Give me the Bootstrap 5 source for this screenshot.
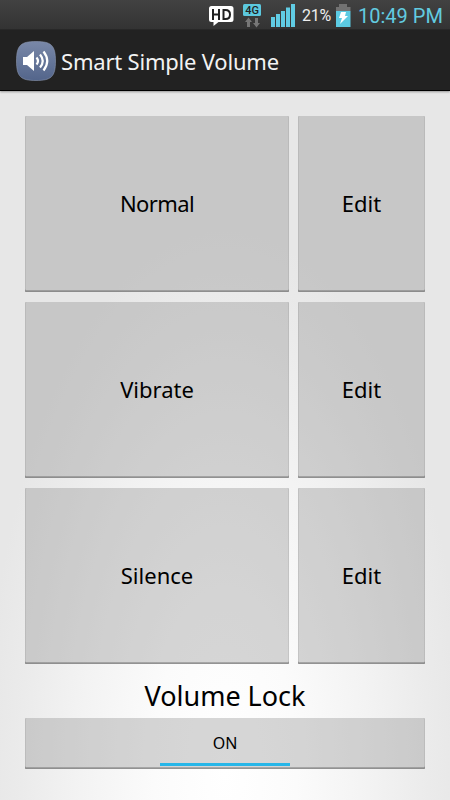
<!DOCTYPE html>
<html lang="en">
<head>
  <meta charset="UTF-8" />
  <meta name="viewport" content="width=device-width, initial-scale=1" />
  <title>Smart Simple Volume</title>
  <link href="https://cdn.jsdelivr.net/npm/bootstrap@5.3.0/dist/css/bootstrap.min.css" rel="stylesheet" />
  <style>
    body {
      height: 800px;
      overflow: hidden;
      font-family: "Noto Sans", "Open Sans", sans-serif;
      color: #000;
      background: radial-gradient(ellipse 240px 540px at 50% 770px, #fff 0%, #fbfbfb 30%, #f3f3f3 60%, #ebebeb 85%, #e7e7e7 100%);
    }
    .status-bar { height: 30px; background: linear-gradient(#424242, #333); border-bottom: 1px solid #292929; font-family: Roboto, sans-serif; line-height: 30px; }
    .status-bar svg { display: block; flex: none; }
    .battery-level { width: 31px; margin-left: 6px; padding-top: 1px; color: #eee; font-size: 16px; letter-spacing: -.3px; white-space: nowrap; }
    .clock { width: 84px; margin-left: 7px; padding-top: 1px; color: #62cbe0; font-size: 20px; white-space: nowrap; }
    .title-bar { height: 61px; padding: 1px 0 0 16px; background: #222; border-bottom: 1px solid #000; box-shadow: 0 1px 2px rgba(0, 0, 0, .35); }
    .title-bar h1 { margin: 0 0 0 5px; color: #f3f3f3; font-size: 22px; font-weight: 400; line-height: 30px; letter-spacing: -.2px; }
    .screen { width: 400px; padding-top: 25px; }
    .profiles { display: grid; grid-template-columns: 264px 127px; grid-auto-rows: 176px; gap: 10px 9px; }
    .btn-holo {
      --bs-btn-color: #000;
      --bs-btn-font-size: 22px;
      --bs-btn-border-radius: 1px;
      padding-top: 0;
      padding-bottom: 2px;
      border: 0;
      background: rgba(140, 140, 140, .35);
      box-shadow: inset 0 -1px 0 rgba(80, 80, 80, .22), inset 0 -2px 0 rgba(80, 80, 80, .35), inset -1px 0 0 rgba(120, 120, 120, .16), inset 1px 0 0 rgba(120, 120, 120, .16);
    }
    .profiles .btn-holo:first-child { letter-spacing: -.6px; }
    .lock-title { height: 54px; font-size: 27px; line-height: 63px; font-weight: 400; margin: 0; }
    .btn-toggle { --bs-btn-font-size: 16px; height: 51px; }
    .toggle-line { left: 135px; bottom: 3px; width: 130px; height: 3px; background: #27b6e8; }
  </style>
</head>
<body>
  <!-- Status bar -->
  <div class="status-bar d-flex">
    <svg width="296" height="30" viewBox="0 0 296 30">
      <path d="M211.500 6H231Q233.500 6 233.500 8.500V19.500Q233.500 22 231 22H218.500L213.500 26V22H211.500Q209 22 209 19.500V8.500Q209 6 211.500 6Z" fill="#fff" />
      <path d="M213 9V20M219 9V20M213 14.500H219M223.500 10H225.500Q230 10 230 14.500T225.500 19H223.500Z" fill="none" stroke="#222" stroke-width="2" />
      <rect x="243" y="4" width="18" height="12" rx="1.500" fill="#5cc8de" />
      <text x="252" y="14" text-anchor="middle" font-family="Roboto" font-size="11" font-weight="500" fill="#222">4G</text>
      <path d="M248.500 17.500L252 22H250V27H247V22H245ZM255 18H258V23H260L256.500 27.500L253 23H255Z" fill="#777" />
      <path d="M271 17H275V27H271ZM276 14H280V27H276ZM281 11H285V27H281ZM286 7.500H290V27H286ZM291 4H295V27H291Z" fill="#60cce4" />
    </svg>
    <span class="battery-level">21%</span>
    <svg width="18" height="30" viewBox="0 0 18 30">
      <path d="M6 4H14V7H17.500V11H3V7H6Z" fill="#727272" />
      <path d="M3 11H17.500V27H3Z" fill="#5ccbe3" />
      <path d="M8 12H13L12 16H15L7 24L9 18H6Z" fill="#fff" />
    </svg>
    <span class="clock">10:49 PM</span>
  </div>

  <!-- Title bar -->
  <header class="title-bar d-flex align-items-center">
    <svg width="40" height="40" viewBox="0 0 40 40">
      <defs>
        <linearGradient id="iconFill" x2="0" y2="1">
          <stop stop-color="#7988a8" />
          <stop offset="1" stop-color="#53658b" />
        </linearGradient>
      </defs>
      <path d="M20 .500C35 .500 39.500 4 39.500 20S35 39.500 20 39.500S.500 36 .500 20S5 .500 20 .500Z" fill="url(#iconFill)" stroke="#8b97b0" stroke-width=".6" />
      <path d="M7 16H11L18 10V30L11 24H7Z" fill="#fff" />
      <path d="M20.500 16.500Q23.500 20 20.500 23.500M24 13.500Q29.500 20 24 26.500M27.500 10.500Q35 20 27.500 29.500" fill="none" stroke="#fff" stroke-width="2.200" />
    </svg>
    <h1>Smart Simple Volume</h1>
  </header>

  <!-- Volume profiles -->
  <main class="screen mx-auto">
    <div class="profiles">
      <button type="button" class="btn btn-holo">Normal</button>
      <button type="button" class="btn btn-holo">Edit</button>
      <button type="button" class="btn btn-holo">Vibrate</button>
      <button type="button" class="btn btn-holo">Edit</button>
      <button type="button" class="btn btn-holo">Silence</button>
      <button type="button" class="btn btn-holo">Edit</button>
    </div>
    <h2 class="lock-title text-center">Volume Lock</h2>
    <button type="button" class="btn btn-holo btn-toggle position-relative w-100">ON<span class="toggle-line position-absolute"></span></button>
  </main>

  <script src="https://cdn.jsdelivr.net/npm/bootstrap@5.3.0/dist/js/bootstrap.bundle.min.js"></script>
</body>
</html>
